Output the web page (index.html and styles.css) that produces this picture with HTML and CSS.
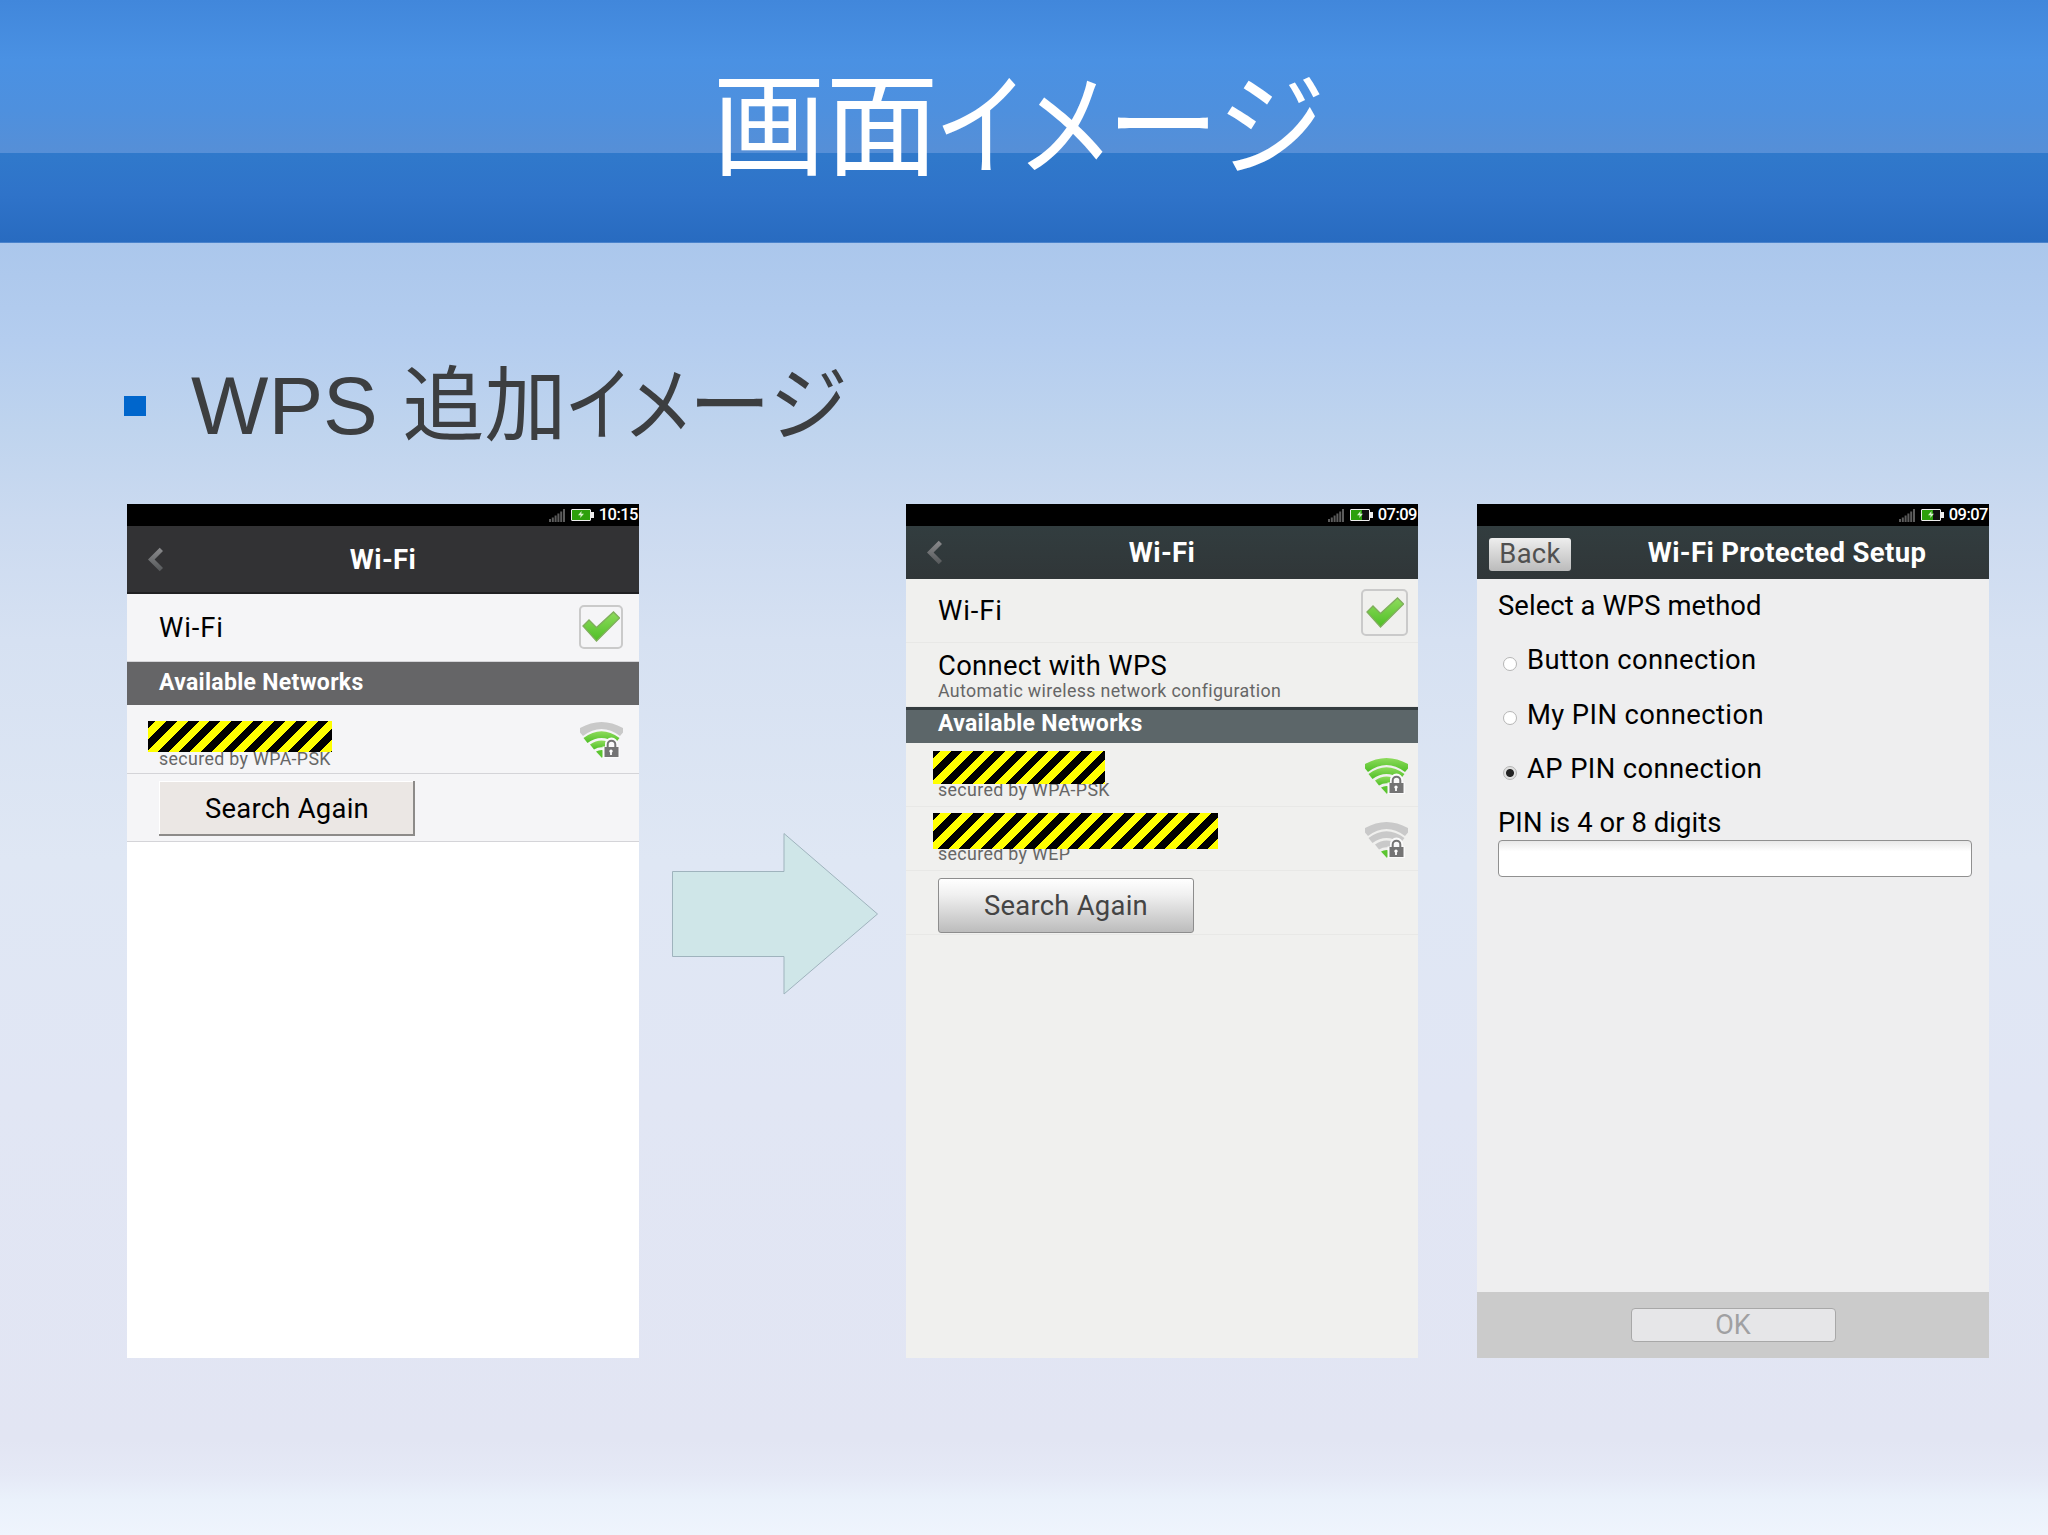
FILE: index.html
```html
<!doctype html>
<html lang="ja">
  <head>
    <meta charset="UTF-8" />
    <meta name="viewport" content="width=device-width, initial-scale=1.0" />
    <title>画面イメージ</title>
    <link rel="stylesheet" href="styles.css">
  </head>
  <body>
    <!-- アイコン定義 -->
    <svg class="defs" width="0" height="0">
      <defs>
        <linearGradient id="green" x1="0" y1="0" x2="0" y2="1">
          <stop offset="0" stop-color="#8edb5c" />
          <stop offset="1" stop-color="#4fbf26" />
        </linearGradient>
        <linearGradient id="chev" x1="0" y1="0" x2="0" y2="1">
          <stop offset="0" stop-color="#8b8b8d" />
          <stop offset="1" stop-color="#55585a" />
        </linearGradient>
        <symbol id="signal" viewBox="0 0 16 13">
          <path d="M0 10h2v3H0zM2.8 8.5h2V13h-2zM5.6 6.5h2V13h-2zM8.4 4.5h2V13h-2zM11.2 2.5h2V13h-2zM14 0h2v13h-2z" fill="#5c5c5c" />
        </symbol>
        <symbol id="back" viewBox="0 0 16 26">
          <path d="M12.5 0.5L16 4L7 13L16 22L12.5 25.5L0 13Z" fill="url(#chev)" />
        </symbol>
        <symbol id="check" viewBox="0 0 38 31">
          <path d="M1 15L7 9L14.500 16.500L31.500 1L37.500 7L14.500 30Z" fill="url(#green)" stroke="#7fae5c" stroke-width="1.300" />
        </symbol>
        <symbol id="wifi-outer" viewBox="0 0 43 36">
          <path d="M0 6Q21.500 -6 43 6V10.500L40 14Q21.500 0 3 14L0 10.500Z" />
        </symbol>
        <symbol id="wifi-inner" viewBox="0 0 43 36">
          <path d="M3.500 16Q21.500 2.500 39.500 16L35.500 21Q21.500 11 7.500 21Z" />
          <path d="M10 22.500Q21.500 14.500 33 22.500L29 27.500Q21.500 23 14 27.500Z" />
        </symbol>
        <symbol id="wifi-lock" viewBox="0 0 43 36">
          <path d="M16 29.500Q21.500 26.500 27 29.500L22 36Z" fill="#5cc531" />
          <path d="M22.500 36V24.500H25V22a6.500 6.500 0 0 1 13 0v2.500H40V36z" fill="#fafafa" />
          <path d="M27.700 26v-3.500a3.800 3.800 0 0 1 7.600 0V26" fill="none" stroke="#747474" stroke-width="2" />
          <path d="M24.500 25H38.500V35H24.500z" fill="#747474" />
          <path d="M31 27.500a1.700 1.700 0 0 1 1.700 1.700q0 .8-.8 1.300V33h-1.800v-2.500q-.8-.5-.8-1.300A1.700 1.700 0 0 1 31 27.500z" fill="#fff" />
        </symbol>
      </defs>
    </svg>

    <header class="slide-header">
      <h1>画面<span class="k k-i">イ</span><span class="k k-me">メ</span><span class="k k-bar">ー</span><span class="k k-ji">ジ</span></h1>
    </header>

    <main class="slide-body">
      <div class="bullet">
        <span class="bullet-mark"></span>
        <h2>WPS 追加<span class="k k-i">イ</span><span class="k k-me">メ</span><span class="k k-bar">ー</span><span class="k k-ji">ジ</span></h2>
      </div>

      <div class="screens">
        <!-- 変更前の Wi-Fi 画面 -->
        <section class="phone phone-old">
          <div class="status-bar">
            <svg class="signal"><use href="#signal" /></svg>
            <span class="battery full"><i></i></span>
            <span class="clock">10:15</span>
          </div>
          <div class="title-bar">
            <svg class="back"><use href="#back" /></svg>
            <span class="title">Wi-Fi</span>
          </div>
          <div class="row">
            <span class="label wifi-label">Wi-Fi</span>
            <span class="checkbox"><svg><use href="#check" /></svg></span>
          </div>
          <div class="section">Available Networks</div>
          <div class="row network">
            <div class="names">
              <span class="tape tape-a"></span>
              <small>secured by WPA-PSK</small>
            </div>
            <svg class="wifi mid">
              <use class="outer" href="#wifi-outer" />
              <use class="inner" href="#wifi-inner" />
              <use href="#wifi-lock" />
            </svg>
          </div>
          <div class="row">
            <span class="btn btn-flat">Search Again</span>
          </div>
        </section>

        <svg class="arrow" viewBox="0 0 206 164">
          <path d="M0.500 39.500H112V1.500L205.500 82L112 162V124.500H0.500Z" />
        </svg>

        <!-- 変更後の Wi-Fi 画面 -->
        <section class="phone phone-new">
          <div class="status-bar">
            <svg class="signal"><use href="#signal" /></svg>
            <span class="battery"><i></i></span>
            <span class="clock">07:09</span>
          </div>
          <div class="title-bar">
            <svg class="back"><use href="#back" /></svg>
            <span class="title">Wi-Fi</span>
          </div>
          <div class="row">
            <span class="label wifi-label">Wi-Fi</span>
            <span class="checkbox"><svg><use href="#check" /></svg></span>
          </div>
          <div class="row">
            <div class="names">
              <span class="label wps">Connect with WPS</span>
              <small>Automatic wireless network configuration</small>
            </div>
          </div>
          <div class="section">Available Networks</div>
          <div class="row network">
            <div class="names">
              <span class="tape tape-b"></span>
              <small>secured by WPA-PSK</small>
            </div>
            <svg class="wifi strong">
              <use class="outer" href="#wifi-outer" />
              <use class="inner" href="#wifi-inner" />
              <use href="#wifi-lock" />
            </svg>
          </div>
          <div class="row network">
            <div class="names">
              <span class="tape tape-c"></span>
              <small>secured by WEP</small>
            </div>
            <svg class="wifi">
              <use class="outer" href="#wifi-outer" />
              <use class="inner" href="#wifi-inner" />
              <use href="#wifi-lock" />
            </svg>
          </div>
          <div class="row">
            <span class="btn btn-grad">Search Again</span>
          </div>
        </section>

        <!-- WPS 設定画面 -->
        <section class="phone phone-wps">
          <div class="status-bar">
            <svg class="signal"><use href="#signal" /></svg>
            <span class="battery"><i></i></span>
            <span class="clock">09:07</span>
          </div>
          <div class="title-bar">
            <span class="back-btn">Back</span>
            <span class="title">Wi-Fi Protected Setup</span>
          </div>
          <div class="wps-form">
            <p>Select a WPS method</p>
            <p class="option"><i class="radio"></i><span>Button connection</span></p>
            <p class="option"><i class="radio"></i><span>My PIN connection</span></p>
            <p class="option"><i class="radio on"></i><span>AP PIN connection</span></p>
            <p class="pin-label">PIN is 4 or 8 digits</p>
            <div class="pin-input"></div>
          </div>
          <div class="footer-bar">
            <span class="ok-btn">OK</span>
          </div>
        </section>
      </div>
    </main>
  </body>
</html>
```

FILE: styles.css
```css
* {
  margin: 0;
  padding: 0;
  box-sizing: border-box;
}

body {
  width: 2048px;
  height: 1535px;
  overflow: hidden;
  font-family: Roboto, 'Noto Sans CJK JP', sans-serif;
  background: linear-gradient(180deg, #abc7ec 243px, #b4cdef 340px, #bfd4ee 430px, #cbdaf0 520px, #d6e1f2 640px, #dfe7f4 860px, #e1e6f4 1100px, #e2e5f3 1440px, #e5e9f6 1475px, #eaf1fb 1500px, #eff4fd 1535px);
}

.defs {
  position: absolute;
}

.slide-header {
  height: 243px;
  display: flex;
  justify-content: center;
  background: linear-gradient(180deg, #4187db 0, #4a91e3 60px, #4e90de 110px, #568fd7 153px, #3079cb 153px, #2f73c9 195px, #286bc0 242px, #6b9ad8 243px);
}

.slide-header h1 {
  font: 400 113px/160px 'Noto Sans CJK JP', sans-serif;
  font-feature-settings: 'palt';
  color: #fff;
  padding-top: 37px;
  margin-right: 8px;
}

/* かなの字幅を詰める */
.k {
  display: inline-block;
  transform-origin: left;
}

.k-i {
  transform: scaleX(0.83);
  margin-right: -0.14em;
}

.k-me {
  transform: scaleX(0.87);
  margin-right: -0.12em;
}

.k-bar {
  margin-right: -0.015em;
}

.k-ji {
  transform: scaleX(0.96);
}

.slide-body {
  padding-left: 124px;
}

.bullet {
  display: flex;
  align-items: center;
  height: 261px;
  padding-top: 64px;
}

.bullet-mark {
  width: 22px;
  height: 20px;
  background: #0066cc;
}

.bullet h2 {
  font: 400 82px/120px 'Liberation Sans', 'Noto Sans CJK JP', sans-serif;
  font-feature-settings: 'palt';
  word-spacing: 2px;
  color: #3c3e40;
  margin-left: 45px;
}

.screens {
  display: flex;
  padding-left: 3px;
}

.phone {
  width: 512px;
  height: 854px;
  display: flex;
  flex-direction: column;
  color: #000;
}

.phone-old {
  background: #fff;
}

.phone-new {
  margin-left: 28px;
  background: #f0f0ee;
}

.phone-wps {
  margin-left: 59px;
  background: #eeeeef;
}

.status-bar {
  height: 22px;
  background: #000;
  display: flex;
  align-items: center;
  justify-content: flex-end;
}

.signal {
  width: 16px;
  height: 13px;
  margin-top: 1px;
}

.battery {
  width: 20px;
  height: 12px;
  margin-left: 6px;
  border: 1.5px solid #eee;
  border-radius: 1px;
  position: relative;
  background: #111;
}

.battery::before {
  content: '';
  position: absolute;
  left: 6px;
  top: 1px;
  width: 6px;
  height: 7px;
  background: #d9f5cf;
  clip-path: polygon(60% 0, 0 60%, 45% 60%, 35% 100%, 100% 40%, 55% 40%);
}

.battery::after {
  content: '';
  position: absolute;
  right: -4px;
  top: 2px;
  width: 3px;
  height: 6px;
  background: #eee;
}

.battery i {
  display: block;
  width: 11px;
  height: 100%;
  background: #2da00c;
}

.battery.full i {
  width: 100%;
}

.clock {
  width: 43px;
  margin-left: 5px;
  color: #fff;
  font-size: 16.5px;
  line-height: 20px;
  font-weight: 500;
  letter-spacing: -0.5px;
  text-align: right;
  padding-right: 1px;
  padding-bottom: 1px;
}

.title-bar {
  height: 53px;
  display: flex;
  align-items: center;
  position: relative;
  background: linear-gradient(180deg, #323d3f, #303638);
}

.phone-old .title-bar {
  height: 68px;
  background: #323234;
  border-bottom: 2px solid #202022;
}

.back {
  width: 15px;
  height: 25px;
  margin-left: 21px;
}

.title {
  color: #fff;
  font-size: 27.5px;
  font-weight: 700;
  letter-spacing: 0.35px;
  position: absolute;
  left: 0;
  width: 100%;
  text-align: center;
}

.phone-wps .title {
  left: 54px;
  width: 512px;
}

.row {
  height: 64px;
  padding-left: 32px;
  padding-right: 10px;
  display: flex;
  align-items: center;
  justify-content: space-between;
  border-bottom: 1px solid #e8e8e6;
}

.phone-old .row {
  height: 68px;
  padding-right: 16px;
  background: #f5f5f7;
  border-bottom: 1px solid #d4d4d8;
}

.phone-old .network {
  height: 69px;
}

.label {
  font-size: 27.4px;
  line-height: 30px;
  letter-spacing: 0.3px;
}

.wifi-label {
  letter-spacing: 0.9px;
}

.names {
  display: flex;
  flex-direction: column;
}

.wps {
  padding-top: 2px;
}

.names small {
  font-size: 17.8px;
  line-height: 20px;
  letter-spacing: 0.36px;
  color: #666;
}

.network .names {
  align-self: flex-start;
}

.checkbox {
  width: 47px;
  height: 47px;
  margin-top: 4px;
  border: 2px solid #cacaca;
  border-radius: 5px;
  display: flex;
  align-items: center;
  justify-content: center;
}

.phone-old .checkbox {
  width: 44px;
  height: 44px;
  margin-top: -2px;
}

.checkbox svg {
  width: 38px;
  height: 31px;
  flex-shrink: 0;
}

.section {
  height: 36px;
  padding-left: 32px;
  background: #5c6669;
  border-top: 3px solid #343c3f;
  color: #fff;
  font-size: 23px;
  line-height: 28px;
  font-weight: 700;
  letter-spacing: 0.3px;
}

.phone-old .section {
  height: 43px;
  background: #656567;
  border-top: none;
  line-height: 42px;
}

/* SSID を隠すテープ */
.tape {
  position: relative;
  margin-left: -5px;
  background: repeating-linear-gradient(135deg, #000 0 5.5px, #ff0 5.5px 13.2px, #000 13.2px 15.3px);
}

.tape-a {
  width: 184px;
  height: 31px;
  margin: 16px 0 -3px -11px;
}

.tape-b {
  width: 172px;
  height: 33px;
  margin-top: 8px;
  margin-bottom: -4px;
}

.tape-c {
  width: 285px;
  height: 36px;
  margin-top: 6px;
  margin-bottom: -5px;
}

.wifi {
  width: 43px;
  height: 36px;
  margin-top: 2px;
  fill: #c9c9c9;
}

.wifi.strong,
.wifi.mid .inner {
  fill: url(#green);
}

.btn {
  width: 256px;
  height: 55px;
  font-size: 27.4px;
  line-height: 54px;
  letter-spacing: 0.25px;
  text-align: center;
}

.btn-flat {
  line-height: 57px;
  margin-top: 1px;
  background: #ebe7e4;
  box-shadow: inset -2px -2px #8d8b89, inset 1px 1px #fff;
}

.btn-grad {
  margin-top: 6px;
  color: #444;
  border: 1px solid #8d8d8d;
  border-radius: 3px;
  background: linear-gradient(180deg, #fff, #f0f0f0 30%, #bcbcbc);
}

.arrow {
  width: 206px;
  height: 164px;
  margin-top: 328px;
  margin-left: 33px;
}

.arrow path {
  fill: #cfe6e8;
  stroke: #9fb3bd;
}

.back-btn {
  width: 82px;
  height: 33px;
  margin-left: 12px;
  margin-top: 4px;
  border-radius: 3px;
  background: linear-gradient(180deg, #eee, #bbb);
  color: #505050;
  font-size: 27.4px;
  line-height: 33px;
  letter-spacing: 0.3px;
  text-align: center;
}

.wps-form {
  flex: 1;
  padding: 0 17px 0 21px;
  font-size: 27.4px;
  letter-spacing: 0.08px;
}

.wps-form p {
  height: 54.3px;
  line-height: 54px;
}

.option {
  display: flex;
  align-items: center;
  letter-spacing: 0.4px;
}

.radio {
  width: 14px;
  height: 14px;
  margin: 7px 10px 0 5px;
  border: 1.5px solid #b5b5b5;
  border-radius: 50%;
  background: #fff;
}

.radio.on {
  background: radial-gradient(circle, #222 0 3.5px, #e0e0e0 4.5px);
}

.wps-form .pin-label {
  height: 44px;
}

.pin-input {
  height: 37px;
  border: 1.5px solid #909090;
  border-radius: 4px;
  background: linear-gradient(180deg, #e8e8e8, #fff 30%);
}

.footer-bar {
  height: 66px;
  display: flex;
  align-items: center;
  justify-content: center;
  background: #cbcbcb;
}

.ok-btn {
  width: 205px;
  height: 34px;
  border: 1.5px solid #a8a8a8;
  border-radius: 4px;
  background: #e6e6e8;
  color: #a0a0a2;
  font-size: 27px;
  line-height: 32px;
  text-align: center;
}
```
